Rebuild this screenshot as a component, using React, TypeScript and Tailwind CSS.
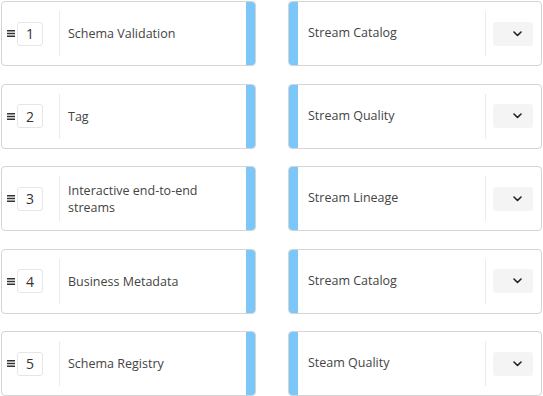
const rows = [
  { n: 1, left: "Schema Validation", right: "Stream Catalog" },
  { n: 2, left: "Tag", right: "Stream Quality" },
  { n: 3, left: "Interactive end-to-end streams", right: "Stream Lineage" },
  { n: 4, left: "Business Metadata", right: "Stream Catalog" },
  { n: 5, left: "Schema Registry", right: "Steam Quality" },
];

function DragHandle() {
  return (
    <svg width="8" height="7" viewBox="0 0 8 7" className="shrink-0">
      <rect x="0" y="0" width="8" height="1.5" fill="#333" />
      <rect x="0" y="2.75" width="8" height="1.5" fill="#333" />
      <rect x="0" y="5.5" width="8" height="1.5" fill="#333" />
    </svg>
  );
}

function Chevron() {
  return (
    <svg width="9" height="6" viewBox="0 0 9 6" fill="none">
      <path d="M1 1l3.5 3.5L8 1" stroke="#222" strokeWidth="1.6" strokeLinecap="round" strokeLinejoin="round" />
    </svg>
  );
}

export default function App() {
  return (
    <div
      className="w-[543px] h-[396px] bg-white p-[1px] flex flex-col gap-[17.5px]"
      style={{ fontFamily: "'Open Sans', 'Liberation Sans', sans-serif" }}
    >
      {rows.map((r) => (
        <div key={r.n} className="grid grid-cols-[255px_254px] gap-[32px]">
          {/* left card */}
          <div className="h-[65px] flex border border-[#d4d4d4] rounded-[4px] overflow-hidden bg-white">
            <div className="flex items-center pl-[5px] pr-[16px] py-[9px]">
              <DragHandle />
              <div className="ml-[2px] w-[26px] h-[24px] flex items-center justify-center border border-[#e6e6e6] rounded-[3px] text-[14px] text-[#333]">
                {r.n}
              </div>
            </div>
            <div className="my-[9px] w-px bg-[#ebebeb]" />
            <div className="flex-1 flex items-center pl-[8px] pr-[10px] text-[12.5px] leading-[17px] text-[#444]">
              {r.left}
            </div>
            <div className="w-[9px] bg-[#7cc7fa]" />
          </div>
          {/* right card */}
          <div className="h-[65px] flex border border-[#d4d4d4] rounded-[4px] overflow-hidden bg-white">
            <div className="w-[9px] bg-[#7cc7fa]" />
            <div className="flex-1 flex items-center pl-[10px] text-[12.5px] text-[#444]">
              {r.right}
            </div>
            <div className="my-[9px] w-px bg-[#ebebeb]" />
            <div className="flex items-center pl-[7px] pr-[8px]">
              <div className="w-[40px] h-[24px] bg-[#f4f4f4] rounded-[3px] flex items-center justify-center pl-[9px]">
                <Chevron />
              </div>
            </div>
          </div>
        </div>
      ))}
    </div>
  );
}
